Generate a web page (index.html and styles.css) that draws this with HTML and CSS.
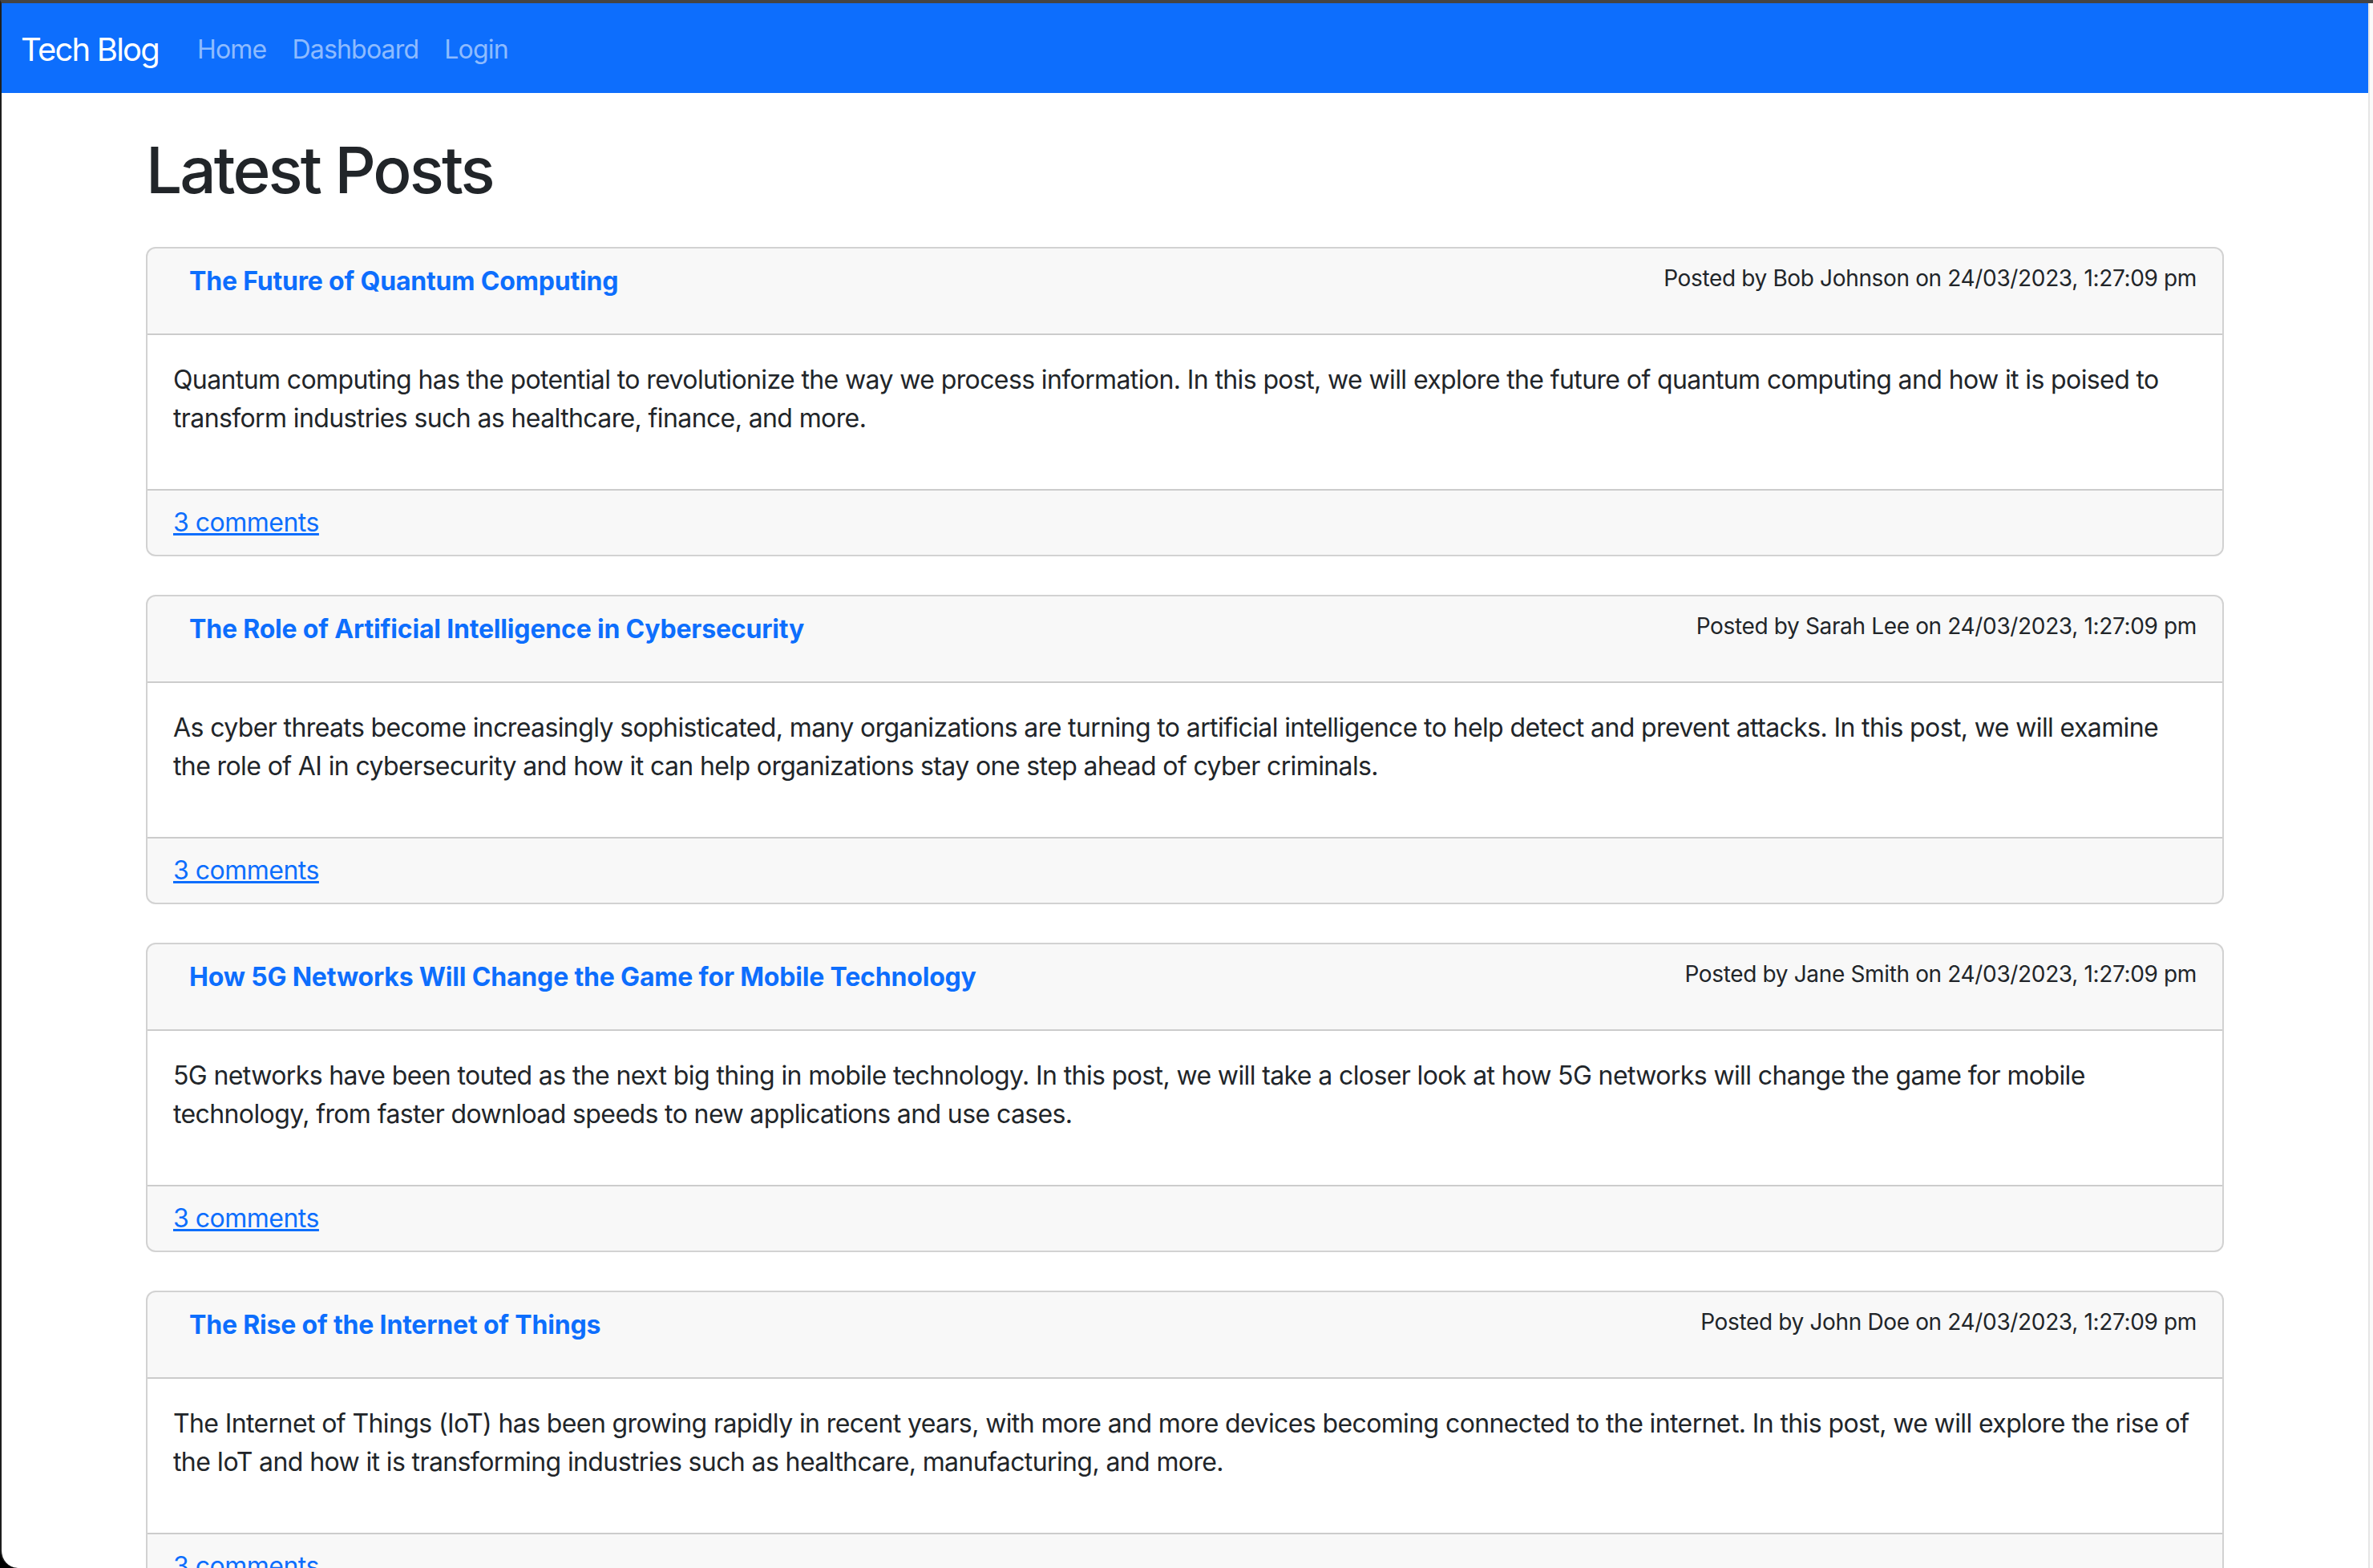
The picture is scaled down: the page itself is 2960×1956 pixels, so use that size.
FILE: index.html
```html
<!DOCTYPE html>
<html lang="en">
<head>
<meta charset="utf-8">
<title>Tech Blog</title>
<link rel="stylesheet" href="styles.css">
</head>
<body>
<div class="window">
  <div class="page">
    <nav class="navbar">
      <a class="brand" href="#">Tech Blog</a>
      <a class="nav-link" href="#">Home</a>
      <a class="nav-link" href="#">Dashboard</a>
      <a class="nav-link" href="#">Login</a>
    </nav>
    <main class="container">
      <h1 class="page-title">Latest Posts</h1>

      <article class="card">
        <header class="card-header">
          <h6 class="post-title"><a href="#">The Future of Quantum Computing</a></h6>
          <p class="meta">Posted by Bob Johnson on 24/03/2023, 1:27:09 pm</p>
        </header>
        <div class="card-body">
          <p>Quantum computing has the potential to revolutionize the way we process information. In this post, we will explore the future of quantum computing and how it is poised to transform industries such as healthcare, finance, and more.</p>
        </div>
        <footer class="card-footer"><a href="#">3 comments</a></footer>
      </article>

      <article class="card">
        <header class="card-header">
          <h6 class="post-title"><a href="#">The Role of Artificial Intelligence in Cybersecurity</a></h6>
          <p class="meta">Posted by Sarah Lee on 24/03/2023, 1:27:09 pm</p>
        </header>
        <div class="card-body">
          <p>As cyber threats become increasingly sophisticated, many organizations are turning to artificial intelligence to help detect and prevent attacks. In this post, we will examine the role of AI in cybersecurity and how it can help organizations stay one step ahead of cyber criminals.</p>
        </div>
        <footer class="card-footer"><a href="#">3 comments</a></footer>
      </article>

      <article class="card">
        <header class="card-header">
          <h6 class="post-title"><a href="#">How 5G Networks Will Change the Game for Mobile Technology</a></h6>
          <p class="meta">Posted by Jane Smith on 24/03/2023, 1:27:09 pm</p>
        </header>
        <div class="card-body">
          <p>5G networks have been touted as the next big thing in mobile technology. In this post, we will take a closer look at how 5G networks will change the game for mobile technology, from faster download speeds to new applications and use cases.</p>
        </div>
        <footer class="card-footer"><a href="#">3 comments</a></footer>
      </article>

      <article class="card">
        <header class="card-header">
          <h6 class="post-title"><a href="#">The Rise of the Internet of Things</a></h6>
          <p class="meta">Posted by John Doe on 24/03/2023, 1:27:09 pm</p>
        </header>
        <div class="card-body">
          <p>The Internet of Things (IoT) has been growing rapidly in recent years, with more and more devices becoming connected to the internet. In this post, we will explore the rise of the IoT and how it is transforming industries such as healthcare, manufacturing, and more.</p>
        </div>
        <footer class="card-footer"><a href="#">3 comments</a></footer>
      </article>
    </main>
  </div>
  <div class="scrollbar"></div>
</div>
</body>
</html>
```

FILE: styles.css
```css
* { box-sizing: border-box; }

html, body {
  margin: 0;
  height: 100%;
  background: #000;
  overflow: hidden;
}

body {
  font-family: Inter, "Liberation Sans", sans-serif;
  font-size: 32px;
  line-height: 1.5;
  color: #212529;
  letter-spacing: -0.61px;
}

.window {
  display: flex;
  height: 1956px;
  background: #fff;
  border-top: 4px solid #444;
  border-left: 2px solid #1e1e1e;
  border-bottom-left-radius: 22px;
  overflow: hidden;
}

.page {
  flex: 1;
  min-width: 0;
}

.scrollbar {
  width: 6px;
  background: #fafafa;
  border-left: 2px solid #e6e6e6;
}

.navbar {
  display: flex;
  align-items: center;
  height: 112px;
  padding: 4px 24px 0;
  background: #0d6efd;
}

.brand {
  color: #fff;
  font-size: 40px;
  letter-spacing: -1.8px;
  text-decoration: none;
  margin-right: 32px;
}

.nav-link {
  color: rgba(255, 255, 255, 0.55);
  letter-spacing: -0.8px;
  text-decoration: none;
  padding: 0 16px;
}

.container {
  max-width: 2640px;
  margin: 48px auto 0;
  padding: 0 24px;
}

.page-title {
  font-size: 80px;
  font-weight: 500;
  line-height: 1.2;
  letter-spacing: -2.9px;
  margin: 0 0 48px;
}

.card {
  border: 2px solid rgba(0, 0, 0, 0.175);
  border-radius: 12px;
  margin-bottom: 48px;
  overflow: hidden;
}

.card-header {
  display: flex;
  justify-content: space-between;
  align-items: flex-start;
  padding: 16px 32px;
  background: rgba(33, 37, 41, 0.03);
  border-bottom: 2px solid rgba(0, 0, 0, 0.175);
}

.post-title {
  margin: 0;
  padding: 6px 20px 0;
  font-size: 32px;
  font-weight: 700;
  line-height: 1.2;
  letter-spacing: -0.18px;
}

.post-title a {
  color: #0d6efd;
  text-decoration: none;
}

.meta {
  margin: 0 0 32px;
  font-size: 28px;
  line-height: 1.5;
  letter-spacing: -0.35px;
}

.card-body {
  padding: 32px;
}

.card-body p {
  margin: 0 0 32px;
}

.card-footer {
  padding: 16px 32px;
  background: rgba(33, 37, 41, 0.03);
  border-top: 2px solid rgba(0, 0, 0, 0.175);
  line-height: 48px;
}

.card-footer a {
  color: #0d6efd;
  letter-spacing: -0.5px;
}
```
